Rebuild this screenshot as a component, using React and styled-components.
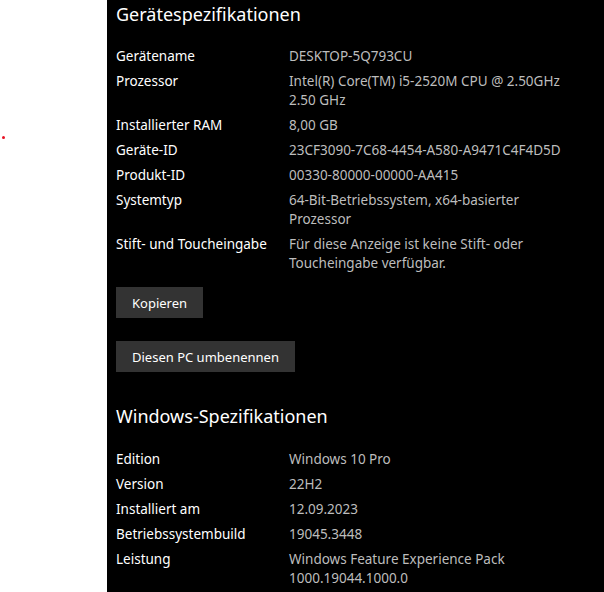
import React from 'react';
import styled, {createGlobalStyle} from "styled-components";

const GlobalStyle = createGlobalStyle`
    html, body, #root {
        height: 100%;
    }
    body {
        margin: 0;
        background: #fff;
        font-family: "Noto Sans", "Open Sans", sans-serif;
    }
`;

const Page = styled.div`
    display: flex;
    height: 100%;
`;

const LeftStrip = styled.div`
    width: 107px;
    flex-shrink: 0;
    background: #fff;
`;

const Dot = styled.div`
    width: 3px;
    height: 3px;
    margin: 136px 0 0 2px;
    background: #e81123;
    border-radius: 50%;
`;

const Panel = styled.div`
    flex: 1;
    background: #000;
    padding-left: 9px;
    overflow: hidden;
`;

const Section = styled.section`
    margin-top: ${p => p.$top || 0}px;
`;

const Title = styled.h2`
    margin: 0 0 ${p => p.$gap || 19}px 0;
    font-size: 18px;
    font-weight: 400;
    line-height: 28px;
    color: #fff;
`;

const Row = styled.div`
    display: grid;
    grid-template-columns: 173px 1fr;
    font-size: 13.5px;
    line-height: 19px;
    padding-bottom: 6px;
`;

const Label = styled.div`
    color: #fff;
`;

const Value = styled.div`
    color: #bdbdbd;
    white-space: nowrap;
`;

const Button = styled.button`
    display: block;
    height: 31px;
    padding: 0 16px;
    border: none;
    background: #333;
    color: #fff;
    font-family: inherit;
    font-size: 13px;
    margin-top: ${p => p.$top || 0}px;
`;

const device = [
    ['Gerätename', ['DESKTOP-5Q793CU']],
    ['Prozessor', ['Intel(R) Core(TM) i5-2520M CPU @ 2.50GHz', '2.50 GHz']],
    ['Installierter RAM', ['8,00 GB']],
    ['Geräte-ID', ['23CF3090-7C68-4454-A580-A9471C4F4D5D']],
    ['Produkt-ID', ['00330-80000-00000-AA415']],
    ['Systemtyp', ['64-Bit-Betriebssystem, x64-basierter', 'Prozessor']],
    ['Stift- und Toucheingabe', ['Für diese Anzeige ist keine Stift- oder', 'Toucheingabe verfügbar.']],
];

const windows = [
    ['Edition', ['Windows 10 Pro']],
    ['Version', ['22H2']],
    ['Installiert am', ['12.09.2023']],
    ['Betriebssystembuild', ['19045.3448']],
    ['Leistung', ['Windows Feature Experience Pack', '1000.19044.1000.0']],
];

const Specs = ({rows}) => rows.map(([label, lines]) => (
    <Row key={label}>
        <Label>{label}</Label>
        <Value>{lines.map(l => <div key={l}>{l}</div>)}</Value>
    </Row>
));

export default function App() {
    return (
        <Page>
            <GlobalStyle/>
            <LeftStrip>
                <Dot/>
            </LeftStrip>
            <Panel>
                <Section>
                    <Title>Gerätespezifikationen</Title>
                    <Specs rows={device}/>
                    <Button $top={8}>Kopieren</Button>
                    <Button $top={23}>Diesen PC umbenennen</Button>
                </Section>
                <Section $top={30}>
                    <Title $gap={20}>Windows-Spezifikationen</Title>
                    <Specs rows={windows}/>
                </Section>
            </Panel>
        </Page>
    );
}
